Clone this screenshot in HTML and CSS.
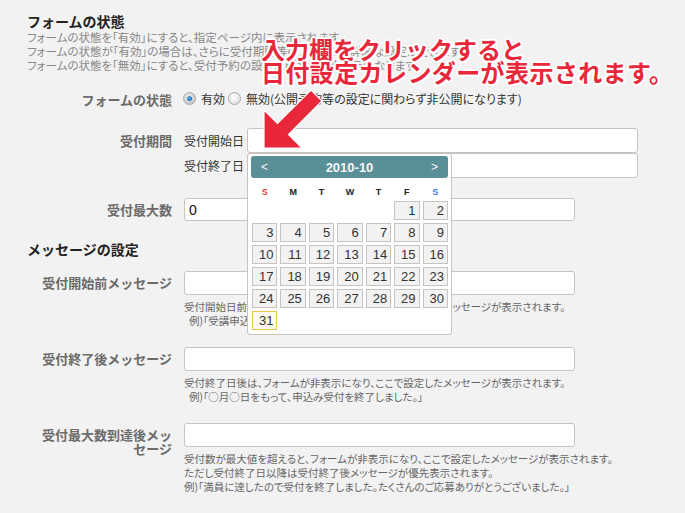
FILE: index.html
```html
<!DOCTYPE html>
<html lang="ja">
<head>
    <meta charset="UTF-8">
    <title>フォームの設定</title>
    <link rel="stylesheet" href="styles.css">
</head>
<body>
    <div class="page">
        <h2 class="section-title">フォームの状態</h2>
        <p class="desc">
            フォームの状態を「有効」にすると、指定ページ内に表示されます。<br>
            フォームの状態が「有効」の場合は、さらに受付期間等のフォームの詳細な設定ができます。<br>
            フォームの状態を「無効」にすると、受付予約の設定に関わらず非表示になります。
        </p>

        <div class="form-row row-status">
            <div class="label">フォームの状態</div>
            <div class="field radios">
                <span class="radio checked"></span><span class="radio-text">有効</span>
                <span class="radio"></span><span class="radio-text">無効(公開予約等の設定に関わらず非公開になります)</span>
            </div>
        </div>

        <div class="form-row row-period">
            <div class="label label-tall">受付期間</div>
            <div class="field">
                <div class="date-line">
                    <span class="date-name">受付開始日</span>
                    <div class="date-field">
                        <input type="text" class="text-input date-input">
                        <div class="calendar">
                            <div class="cal-head">
                                <span>&lt;</span>
                                <strong>2010-10</strong>
                                <span>&gt;</span>
                            </div>
                            <div class="cal-week">
                                <span class="sun">S</span><span>M</span><span>T</span><span>W</span><span>T</span><span>F</span><span class="sat">S</span>
                            </div>
                            <div class="cal-grid">
                                <span class="blank"></span><span class="blank"></span><span class="blank"></span><span class="blank"></span><span class="blank"></span>
                                <span class="day">1</span><span class="day">2</span>
                                <span class="day">3</span><span class="day">4</span><span class="day">5</span><span class="day">6</span><span class="day">7</span><span class="day">8</span><span class="day">9</span>
                                <span class="day">10</span><span class="day">11</span><span class="day">12</span><span class="day">13</span><span class="day">14</span><span class="day">15</span><span class="day">16</span>
                                <span class="day">17</span><span class="day">18</span><span class="day">19</span><span class="day">20</span><span class="day">21</span><span class="day">22</span><span class="day">23</span>
                                <span class="day">24</span><span class="day">25</span><span class="day">26</span><span class="day">27</span><span class="day">28</span><span class="day">29</span><span class="day">30</span>
                                <span class="day today">31</span>
                            </div>
                        </div>
                    </div>
                </div>
                <div class="date-line">
                    <span class="date-name">受付終了日</span>
                    <input type="text" class="text-input date-input">
                </div>
            </div>
        </div>

        <div class="form-row row-max">
            <div class="label">受付最大数</div>
            <div class="field">
                <input type="text" class="text-input" value="0">
            </div>
        </div>

        <h2 class="section-title title-message">メッセージの設定</h2>

        <div class="form-row row-msg-first">
            <div class="label">受付開始前メッセージ</div>
            <div class="field">
                <input type="text" class="text-input">
                <p class="help">
                    受付開始日前は、フォームが非表示になり、ここで設定したメッセージが表示されます。<br>
                    <span class="indent">例)「受講申込みは○月○日より受付を開始します。」</span>
                </p>
            </div>
        </div>

        <div class="form-row row-msg">
            <div class="label">受付終了後メッセージ</div>
            <div class="field">
                <input type="text" class="text-input">
                <p class="help">
                    受付終了日後は、フォームが非表示になり、ここで設定したメッセージが表示されます。<br>
                    <span class="indent">例)「○月○日をもって、申込み受付を終了しました。」</span>
                </p>
            </div>
        </div>

        <div class="form-row row-msg">
            <div class="label">受付最大数到達後メッセージ</div>
            <div class="field">
                <input type="text" class="text-input">
                <p class="help">
                    受付数が最大値を超えると、フォームが非表示になり、ここで設定したメッセージが表示されます。<br>
                    ただし受付終了日以降は受付終了後メッセージが優先表示されます。<br>
                    例)「満員に達したので受付を終了しました。たくさんのご応募ありがとうございました。」
                </p>
            </div>
        </div>

        <div class="note">入力欄をクリックすると<br><span class="note-second">日付設定カレンダーが表示されます。</span></div>
        <svg class="note-arrow" width="72" height="64" viewBox="258 88 72 64">
            <polygon points="264,110 277.5,123.5 311,90 322,101 288.5,134.5 302,148 264,148" fill="#e8283a" stroke="#fff" stroke-width="1.2"/>
        </svg>
    </div>
</body>
</html>
```

FILE: styles.css
```css
html, body {
    margin: 0;
    padding: 0;
}

body {
    background-color: #f2f2f2;
    font-family: "Noto Sans CJK JP", "Liberation Sans", sans-serif;
    color: #333;
    width: 685px;
    height: 513px;
    overflow: hidden;
}

.page {
    position: relative;
    padding: 12px 0 0 27px;
}

.section-title {
    margin: 0;
    font-size: 14px;
    line-height: 18px;
    font-weight: bold;
    color: #222;
}

.title-message {
    margin-top: 19px;
}

.desc {
    margin: 0;
    font-size: 11.5px;
    line-height: 14px;
    color: #888;
    font-feature-settings: "palt";
}

.form-row {
    display: flex;
    gap: 12px;
}

.label {
    width: 139px;
    padding-left: 6px;
    flex-shrink: 0;
    text-align: right;
    font-size: 13px;
    font-weight: bold;
    line-height: 14px;
    padding-top: 5px;
    color: #6b6b6b;
}

.label-tall {
    padding-top: 6px;
}

.field {
    flex: 1;
}

.row-status {
    margin-top: 16px;
    height: 20px;
}

.radios {
    display: flex;
    align-items: center;
    font-size: 12px;
    color: #333;
    font-feature-settings: "palt";
    margin-left: -1px;
}

.radio {
    width: 11px;
    height: 11px;
    border-radius: 50%;
    border: 1px solid #a8a8a8;
    background: radial-gradient(circle at 40% 35%, #fff, #d6d6d6);
    margin-right: 5px;
    position: relative;
}

.radio.checked {
    background: radial-gradient(circle at 40% 35%, #eee, #b8b8b8);
}

.radio.checked::after {
    content: "";
    position: absolute;
    left: 3px;
    top: 3px;
    width: 5px;
    height: 5px;
    border-radius: 50%;
    background: radial-gradient(circle at 40% 35%, #5aa7e6, #0b5aa8);
}

.radio-text {
    margin-right: 3px;
}

.row-period {
    margin-top: 20px;
}

.date-line {
    display: flex;
    align-items: center;
    height: 25px;
}

.date-name {
    width: 63px;
    font-size: 12px;
    color: #333;
}

.date-field {
    position: relative;
}

.text-input {
    display: block;
    box-sizing: border-box;
    width: 391px;
    height: 24px;
    margin: 0;
    padding: 0 4px;
    border: 1px solid #c8c3bf;
    border-radius: 3px;
    background-color: #fff;
    font-family: "Liberation Sans", sans-serif;
    font-size: 14px;
    color: #111;
}

.date-input {
    height: 25px;
}

.row-max {
    margin-top: 20px;
}

.row-max .text-input {
    height: 23px;
}

.row-msg-first {
    margin-top: 13px;
}

.row-msg {
    margin-top: 19px;
}

.help {
    margin: 5px 0 0;
    font-size: 10.5px;
    line-height: 14px;
    color: #666;
    font-feature-settings: "palt";
}

.indent {
    padding-left: 5px;
}

/* calendar popup */
.calendar {
    position: absolute;
    left: 0;
    top: 25px;
    z-index: 5;
    width: 205px;
    height: 182px;
    box-sizing: border-box;
    padding: 2px 3px 0 4px;
    background-color: #fff;
    border: 1px solid #c8c3bf;
    border-radius: 3px;
}

.cal-head {
    display: flex;
    justify-content: space-between;
    align-items: center;
    height: 22px;
    margin-left: -1px;
    padding: 0 10px;
    background-color: #5b8f98;
    border-radius: 3px;
    color: #f4f8f8;
    font-family: "Liberation Sans", sans-serif;
    font-size: 12px;
}

.cal-head strong {
    font-size: 13px;
}

.cal-week {
    display: grid;
    grid-template-columns: repeat(7, 1fr);
    column-gap: 3px;
    height: 23px;
    box-sizing: border-box;
    padding-top: 4px;
    align-items: center;
    text-align: center;
    font-family: "Liberation Sans", sans-serif;
    font-size: 9px;
    font-weight: bold;
    color: #222;
}

.cal-week .sun {
    color: #ee3b3b;
}

.cal-week .sat {
    color: #3b7fe8;
}

.cal-grid {
    display: grid;
    grid-template-columns: repeat(7, 1fr);
    grid-auto-rows: 19px;
    gap: 3px;
}

.day {
    box-sizing: border-box;
    border: 1px solid #c8c3bf;
    background-color: #f2f2f2;
    text-align: right;
    padding-right: 3px;
    font-family: "Liberation Sans", sans-serif;
    font-size: 13px;
    line-height: 17px;
    color: #333;
}

.day.today {
    background-color: #fdfaf0;
    border-color: #e8c84a;
}

/* annotation over the screenshot */
.note {
    position: absolute;
    left: 261px;
    top: 37px;
    z-index: 10;
    font-size: 24px;
    line-height: 23px;
    font-weight: bold;
    color: #e8283a;
    white-space: nowrap;
    text-shadow:
        2px 0 0 #fff, -2px 0 0 #fff, 0 2px 0 #fff, 0 -2px 0 #fff,
        1.5px 1.5px 0 #fff, -1.5px 1.5px 0 #fff, 1.5px -1.5px 0 #fff, -1.5px -1.5px 0 #fff;
}

.note-second {
    letter-spacing: 0.4px;
}

.note-arrow {
    position: absolute;
    left: 258px;
    top: 88px;
    z-index: 10;
}
```
